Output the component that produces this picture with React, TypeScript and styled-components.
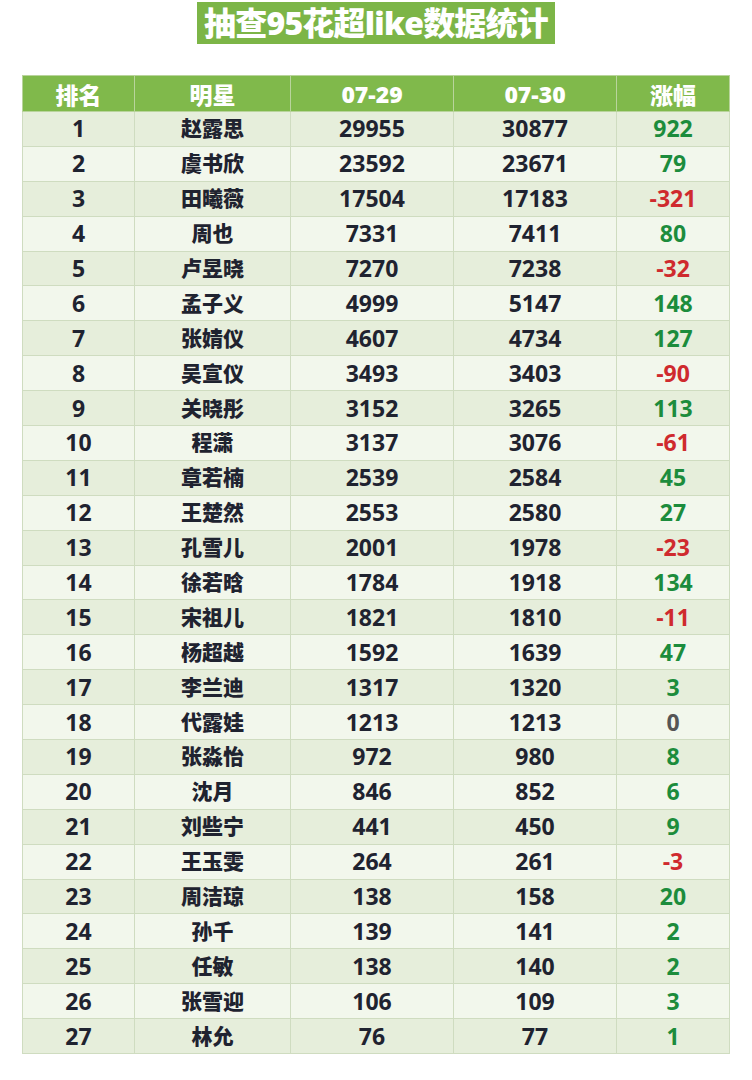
import React from 'react'
import styled, { createGlobalStyle } from 'styled-components'

interface Star {
  name: string
  d1: number
  d2: number
}

const STARS: Star[] = [
  { name: '赵露思', d1: 29955, d2: 30877 },
  { name: '虞书欣', d1: 23592, d2: 23671 },
  { name: '田曦薇', d1: 17504, d2: 17183 },
  { name: '周也', d1: 7331, d2: 7411 },
  { name: '卢昱晓', d1: 7270, d2: 7238 },
  { name: '孟子义', d1: 4999, d2: 5147 },
  { name: '张婧仪', d1: 4607, d2: 4734 },
  { name: '吴宣仪', d1: 3493, d2: 3403 },
  { name: '关晓彤', d1: 3152, d2: 3265 },
  { name: '程潇', d1: 3137, d2: 3076 },
  { name: '章若楠', d1: 2539, d2: 2584 },
  { name: '王楚然', d1: 2553, d2: 2580 },
  { name: '孔雪儿', d1: 2001, d2: 1978 },
  { name: '徐若晗', d1: 1784, d2: 1918 },
  { name: '宋祖儿', d1: 1821, d2: 1810 },
  { name: '杨超越', d1: 1592, d2: 1639 },
  { name: '李兰迪', d1: 1317, d2: 1320 },
  { name: '代露娃', d1: 1213, d2: 1213 },
  { name: '张淼怡', d1: 972, d2: 980 },
  { name: '沈月', d1: 846, d2: 852 },
  { name: '刘些宁', d1: 441, d2: 450 },
  { name: '王玉雯', d1: 264, d2: 261 },
  { name: '周洁琼', d1: 138, d2: 158 },
  { name: '孙千', d1: 139, d2: 141 },
  { name: '任敏', d1: 138, d2: 140 },
  { name: '张雪迎', d1: 106, d2: 109 },
  { name: '林允', d1: 76, d2: 77 },
]

const GlobalStyle = createGlobalStyle`
  body {
    margin: 0;
    background: #fff;
    font-family: "Open Sans", "Noto Sans CJK SC", sans-serif;
  }
`

const App: React.FC = () => (
  <Page>
    <GlobalStyle />
    <Title>抽查95花超like数据统计</Title>
    <Table>
      <thead>
        <tr>
          <Head style={{ width: 111 }}>排名</Head>
          <Head style={{ width: 155 }}>明星</Head>
          <Head style={{ width: 162 }}>07-29</Head>
          <Head style={{ width: 162 }}>07-30</Head>
          <Head>涨幅</Head>
        </tr>
      </thead>
      <tbody>
        {STARS.map((s, i) => {
          const diff = s.d2 - s.d1
          return (
            <Row key={s.name} $odd={i % 2 === 0}>
              <Cell>{i + 1}</Cell>
              <NameCell>{s.name}</NameCell>
              <Cell>{s.d1}</Cell>
              <Cell>{s.d2}</Cell>
              <DiffCell $tone={diff > 0 ? 'up' : diff < 0 ? 'down' : 'flat'}>{diff}</DiffCell>
            </Row>
          )
        })}
      </tbody>
    </Table>
  </Page>
)

const Page = styled.div`
  width: 752px;
  min-height: 1080px;
  display: flex;
  flex-direction: column;
  align-items: center;
  padding-top: 2px;
  box-sizing: border-box;
`

const Title = styled.div`
  background: #7cb547;
  color: #fff;
  font-weight: 900;
  font-size: 32px;
  line-height: 42px;
  height: 42px;
  padding: 0 7px;
  box-sizing: border-box;
  text-align: center;
  letter-spacing: -0.8px;
  white-space: nowrap;
`

const Table = styled.table`
  margin-top: 31px;
  width: 708px;
  border-collapse: collapse;
  table-layout: fixed;
  border: 1px solid #c9d9b8;
`

const Head = styled.th`
  background: #80b94b;
  color: #fff;
  font-size: 23px;
  font-weight: 800;
  height: 35px;
  padding: 0;
  border: 1px solid #b9d49c;
  text-align: center;
`

const Row = styled.tr<{ $odd: boolean }>`
  background: ${(p) => (p.$odd ? '#e6eedb' : '#f2f7ec')};
`

const Cell = styled.td`
  height: 33.9px;
  padding: 0;
  border: 1px solid #cfdcc0;
  text-align: center;
  font-size: 23px;
  font-weight: 700;
  color: #1f2330;
  line-height: 1;
`

const NameCell = styled(Cell)`
  font-size: 21px;
  font-weight: 900;
`

const DiffCell = styled(Cell)<{ $tone: 'up' | 'down' | 'flat' }>`
  color: ${(p) => (p.$tone === 'up' ? '#1c8c3c' : p.$tone === 'down' ? '#cf2a2e' : '#555')};
`

export default App
